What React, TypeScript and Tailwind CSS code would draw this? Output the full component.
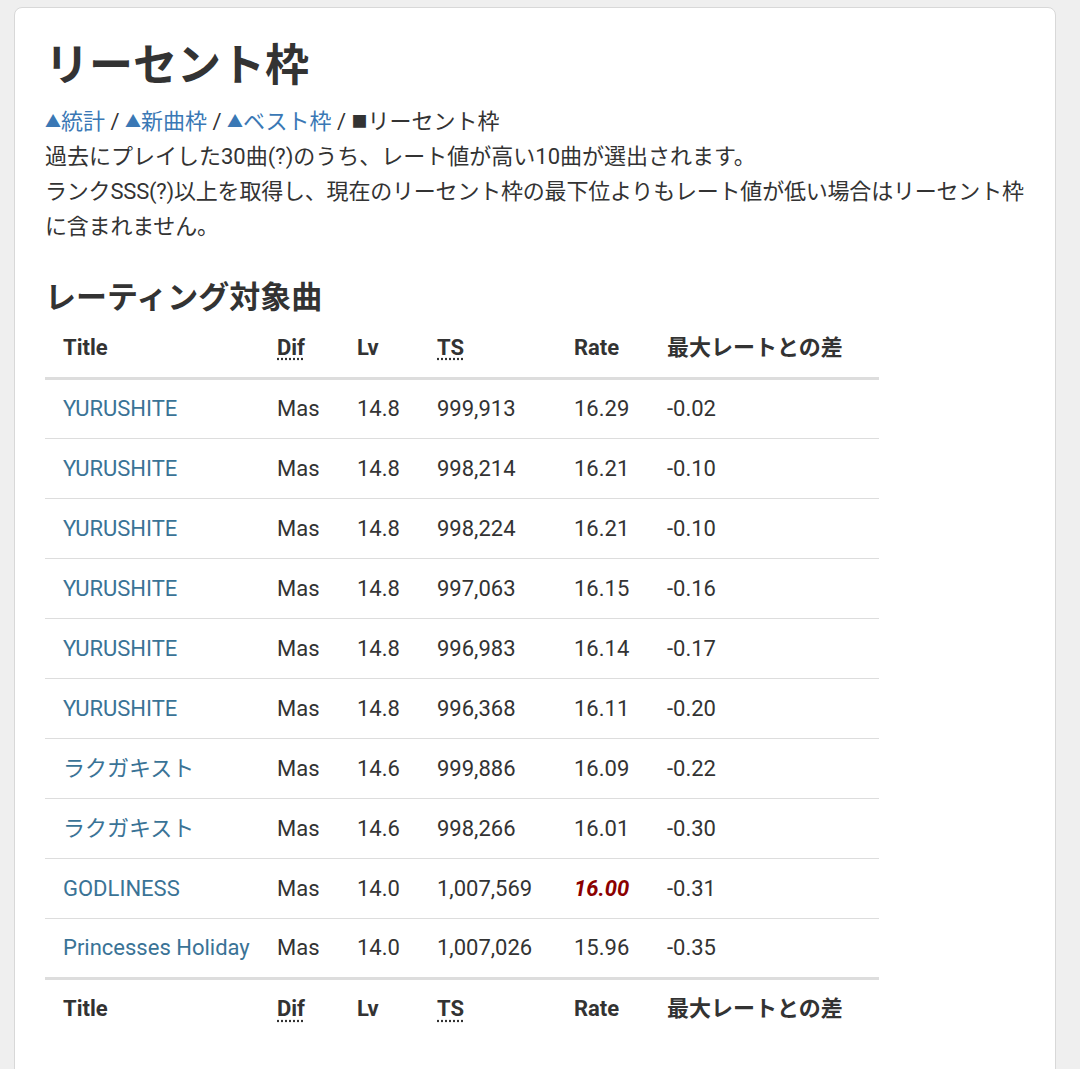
const rows: [string, string, string, string, string, string][] = [
  ["YURUSHITE", "Mas", "14.8", "999,913", "16.29", "-0.02"],
  ["YURUSHITE", "Mas", "14.8", "998,214", "16.21", "-0.10"],
  ["YURUSHITE", "Mas", "14.8", "998,224", "16.21", "-0.10"],
  ["YURUSHITE", "Mas", "14.8", "997,063", "16.15", "-0.16"],
  ["YURUSHITE", "Mas", "14.8", "996,983", "16.14", "-0.17"],
  ["YURUSHITE", "Mas", "14.8", "996,368", "16.11", "-0.20"],
  ["ラクガキスト", "Mas", "14.6", "999,886", "16.09", "-0.22"],
  ["ラクガキスト", "Mas", "14.6", "998,266", "16.01", "-0.30"],
  ["GODLINESS", "Mas", "14.0", "1,007,569", "16.00", "-0.31"],
  ["Princesses Holiday", "Mas", "14.0", "1,007,026", "15.96", "-0.35"],
];

function Head() {
  return (
    <tr>
      <th className="text-left font-bold pl-[18px] h-[60px]">Title</th>
      <th className="text-left font-bold"><span className="underline decoration-dotted underline-offset-4">Dif</span></th>
      <th className="text-left font-bold">Lv</th>
      <th className="text-left font-bold"><span className="underline decoration-dotted underline-offset-4">TS</span></th>
      <th className="text-left font-bold">Rate</th>
      <th className="text-left font-bold">最大レートとの差</th>
    </tr>
  );
}

function Tri() {
  return <span className="text-[16px] align-[2px]">▲</span>;
}

export default function App() {
  return (
    <div className="bg-[#efefef] min-h-[1069px] pt-[7px] pl-[14px] pr-[24px] overflow-hidden" style={{ fontFamily: "Roboto, 'Noto Sans CJK JP', sans-serif" }}>
      <div className="bg-white rounded-t-[8px] border border-[#d8d8d8] min-h-[1080px] pl-[30px] pr-[30px] pt-[28px] text-[#333]">
        <h1 className="text-[44px] font-bold leading-[60px] text-[#333]">リーセント枠</h1>
        <div className="text-[22px] leading-[35px] mt-[8px]">
          <div>
            <a className="text-[#3a78b5]"><Tri />統計</a> / <a className="text-[#3a78b5]"><Tri />新曲枠</a> / <a className="text-[#3a78b5]"><Tri />ベスト枠</a> / <span className="text-[16px] align-[2px]">■</span>リーセント枠
          </div>
          <div>過去にプレイした30曲(?)のうち、レート値が高い10曲が選出されます。</div>
          <div className="tracking-[-0.2px]">ランクSSS(?)以上を取得し、現在のリーセント枠の最下位よりもレート値が低い場合はリーセント枠に含まれません。</div>
        </div>
        <h2 className="text-[31px] font-bold leading-[40px] mt-[34px]">レーティング対象曲</h2>
        <table className="mt-[0px] w-[834px] text-[22px] border-collapse table-fixed">
          <colgroup>
            <col className="w-[232px]" />
            <col className="w-[80px]" />
            <col className="w-[80px]" />
            <col className="w-[137px]" />
            <col className="w-[93px]" />
            <col />
          </colgroup>
          <thead className="border-b-[3px] border-[#ddd]"><Head /></thead>
          <tbody>
            {rows.map((r, i) => (
              <tr key={i} className="border-b border-[#ddd] h-[60px]">
                <td className="pl-[18px] text-[#3a7396] whitespace-nowrap">{r[0]}</td>
                <td>{r[1]}</td>
                <td>{r[2]}</td>
                <td>{r[3]}</td>
                <td className={r[4] === "16.00" ? "text-[#8b0000] font-bold italic" : ""}>{r[4]}</td>
                <td>{r[5]}</td>
              </tr>
            ))}
          </tbody>
          <tfoot className="border-t-[3px] border-[#ddd]"><Head /></tfoot>
        </table>
      </div>
    </div>
  );
}
